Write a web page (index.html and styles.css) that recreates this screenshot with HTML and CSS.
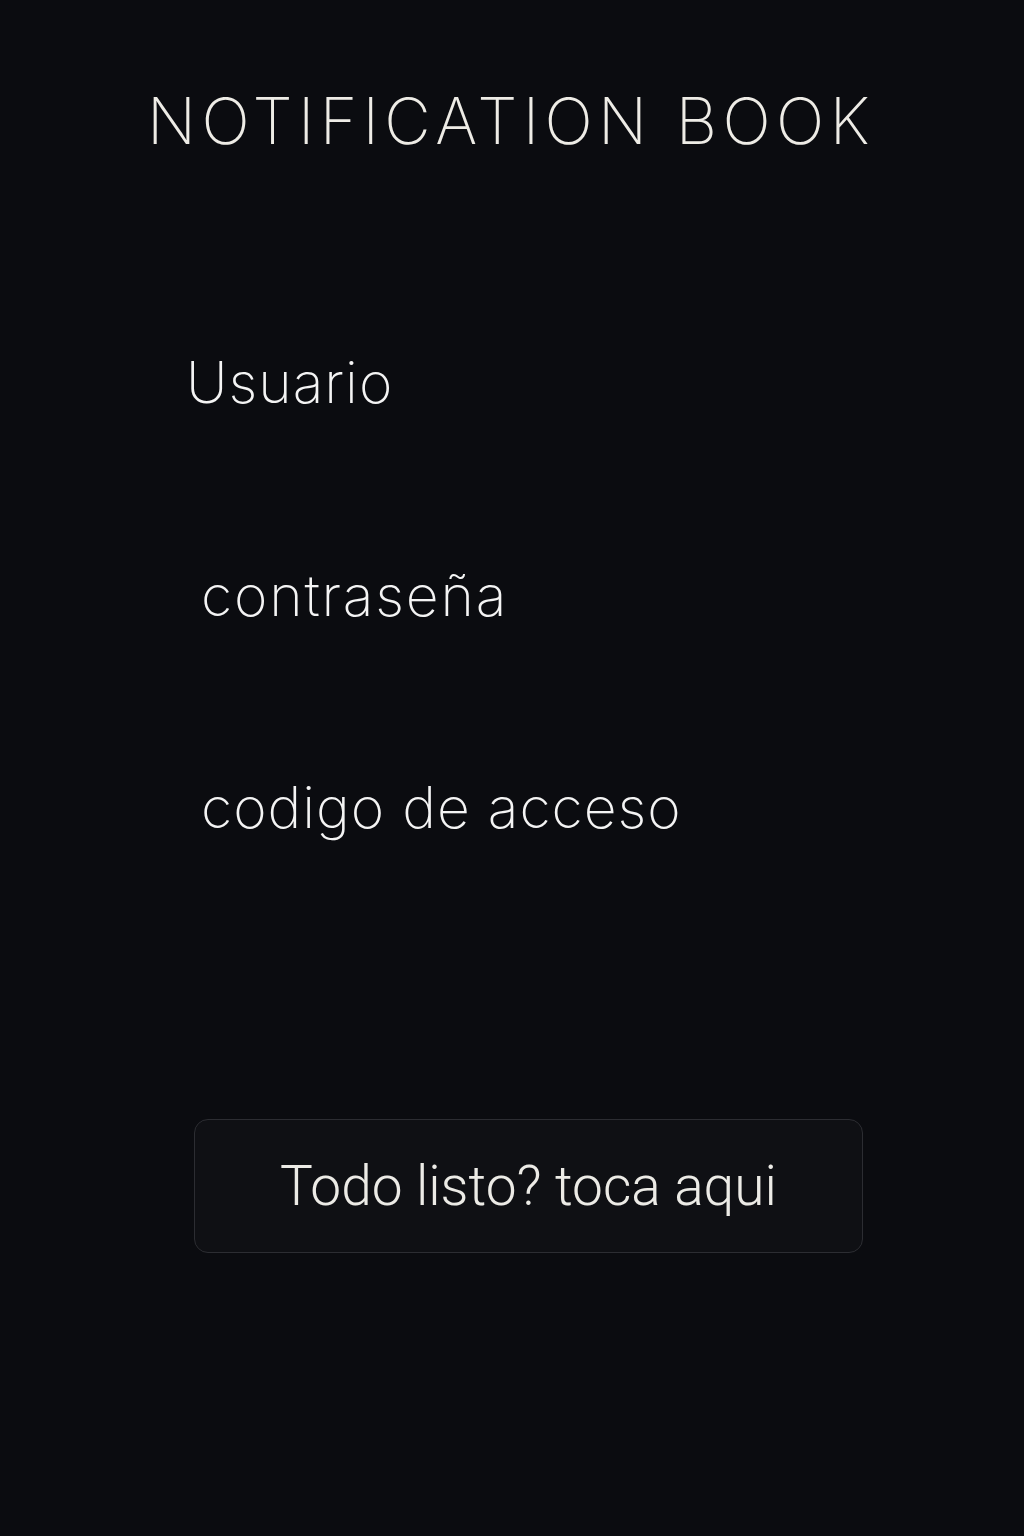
FILE: index.html
```html
<!DOCTYPE html>
<html lang="es">
<head>
<meta charset="utf-8">
<title>Notification Book</title>
<link rel="stylesheet" href="styles.css">
</head>
<body>
<main class="screen">
  <h1 class="title">NOTIFICATION BOOK</h1>
  <form class="form">
    <div class="field field-user">Usuario</div>
    <div class="field field-pass">contraseña</div>
    <div class="field field-code">codigo de acceso</div>
    <button type="button" class="submit">Todo listo? toca aqui</button>
  </form>
</main>
</body>
</html>
```
FILE: styles.css
```css
html, body {
  margin: 0;
  padding: 0;
  background: #0b0c10;
}
.screen {
  width: 1024px;
  height: 1536px;
  background: #0b0c10;
  color: #f2f1ee;
  display: flex;
  flex-direction: column;
}
.title {
  margin: 0;
  padding-top: 86px;
  padding-left: 147px;
  font-family: "Inter", "Noto Sans", sans-serif;
  font-weight: 200;
  font-size: 64px;
  line-height: 70px;
  letter-spacing: 5.4px;
  color: #eeece6;
  white-space: nowrap;
}
.form {
  display: flex;
  flex-direction: column;
  padding-left: 186px;
}
.field {
  font-family: "Inter", "Noto Sans", sans-serif;
  font-weight: 200;
  font-size: 57px;
  line-height: 70px;
  letter-spacing: 1px;
  color: #f4f4f4;
}
.field-user {
  margin-top: 192px;
}
.field-pass {
  margin-top: 143px;
  margin-left: 15px;
  letter-spacing: 1.8px;
}
.field-code {
  margin-top: 142px;
  margin-left: 15px;
}
.submit {
  margin-top: 276px;
  margin-left: 8px;
  width: 669px;
  height: 134px;
  box-sizing: border-box;
  border: 1px solid #2c2d32;
  border-radius: 14px;
  background: #0f1014;
  color: #ecebe6;
  font-family: "Roboto", "Liberation Sans", sans-serif;
  font-weight: 300;
  font-size: 55px;
  letter-spacing: 0px;
  padding: 0;
  text-align: center;
}
```
